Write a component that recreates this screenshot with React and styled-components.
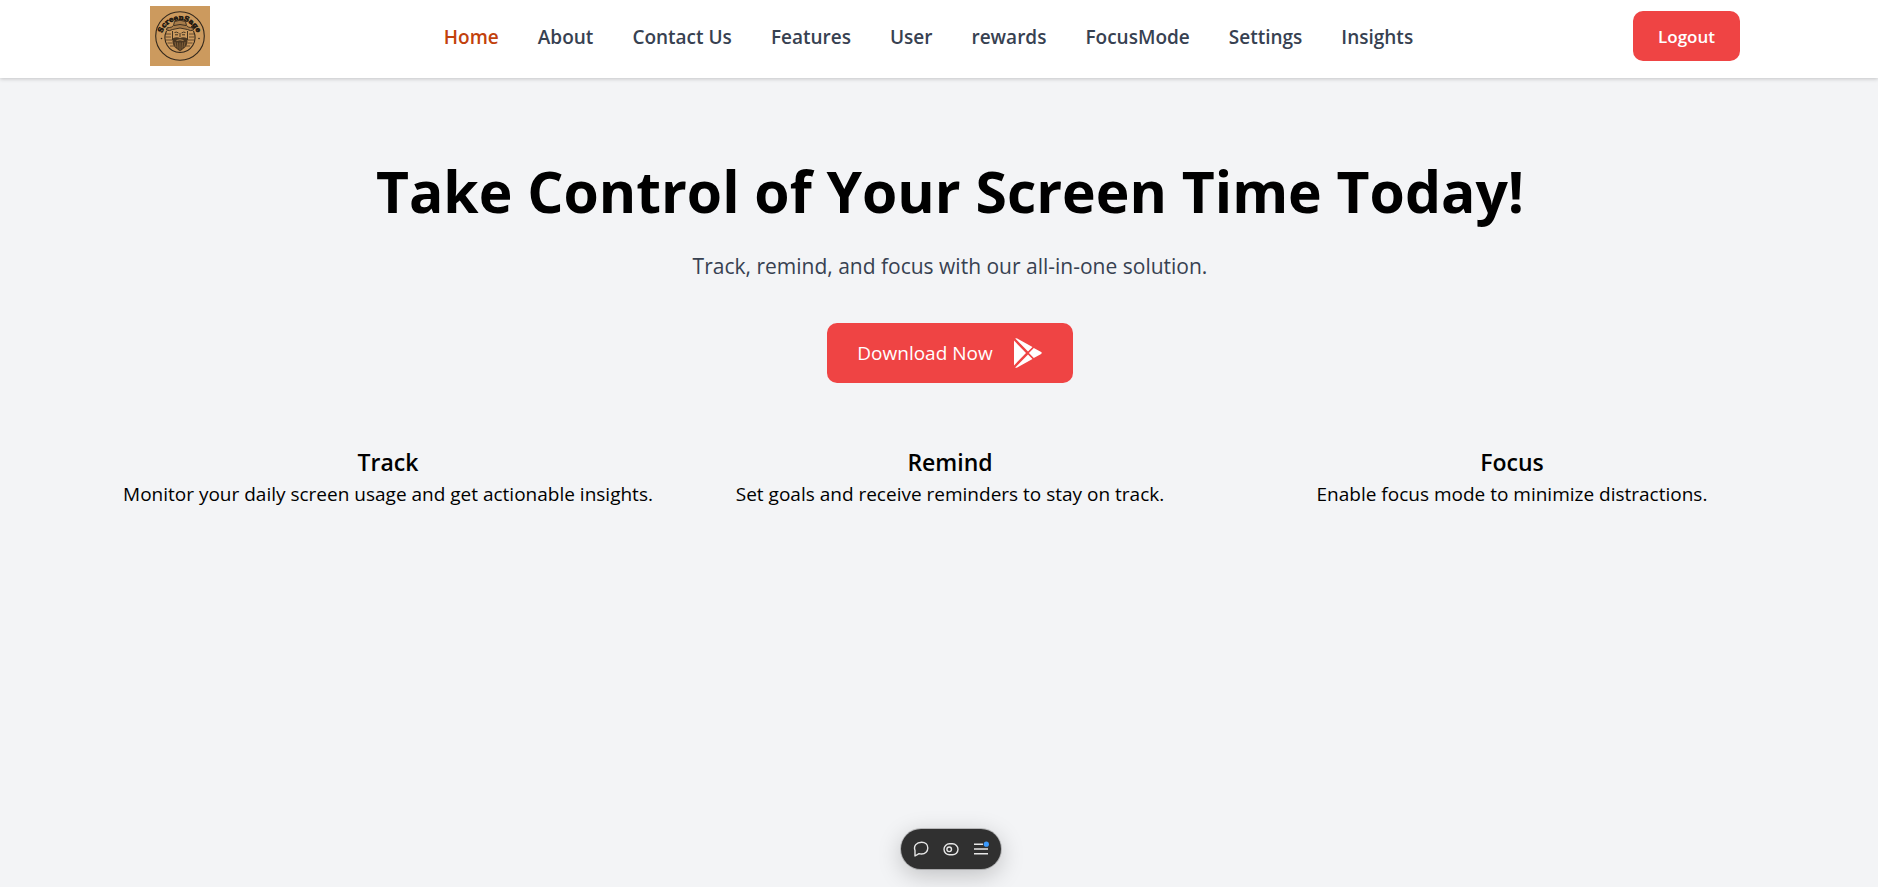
import React from "react";
import styled, { createGlobalStyle } from "styled-components";

const GlobalStyle = createGlobalStyle`
  *, *::before, *::after { box-sizing: border-box; }
  body {
    margin: 0;
    background: #f3f4f6;
    color: #000;
    font-family: "Open Sans", "Noto Sans", sans-serif;
    overflow-x: hidden;
  }
  h1, h2, p, ul { margin: 0; padding: 0; }
`;

const Page = styled.div`
  min-height: 100vh;
`;

const Header = styled.header`
  display: flex;
  align-items: flex-start;
  justify-content: space-between;
  height: 78px;
  padding: 6px 138px 0 150px;
  background: #fff;
  box-shadow: 0 1px 4px rgba(0, 0, 0, 0.2);
`;

const LogoLink = styled.a`
  display: block;
  width: 60px;
  height: 60px;
`;

const NavList = styled.ul`
  display: flex;
  gap: 39px;
  padding: 16px 0 0 14px;
  list-style: none;
`;

const NavLink = styled.a`
  display: block;
  color: ${(p) => (p.$active ? "#c2410c" : "#374151")};
  font-size: 19px;
  font-weight: 600;
  line-height: 30px;
  text-decoration: none;
  white-space: nowrap;
`;

const Button = styled.button`
  display: inline-flex;
  align-items: center;
  justify-content: center;
  gap: 20px;
  border: 0;
  border-radius: 10px;
  background: #ef4444;
  color: #fff;
  font-family: inherit;
  white-space: nowrap;
  cursor: pointer;
`;

const LogoutButton = styled(Button)`
  width: 107px;
  height: 50px;
  margin-top: 5px;
  font-size: 17px;
  font-weight: 600;
`;

const DownloadButton = styled(Button)`
  height: 60px;
  margin-top: 39px;
  padding: 0 30px;
  font-size: 19px;
`;

const Main = styled.main`
  display: flex;
  flex-direction: column;
  align-items: center;
  padding: 77px 85px 0 107px;
  text-align: center;
`;

const Title = styled.h1`
  font-size: 57px;
  font-weight: 700;
  line-height: 72px;
`;

const Subtitle = styled.p`
  margin-top: 21px;
  color: #374151;
  font-size: 21px;
  line-height: 36px;
`;

const Features = styled.section`
  display: grid;
  grid-template-columns: repeat(3, 1fr);
  width: 100%;
  margin-top: 61px;
`;

const FeatureTitle = styled.h2`
  font-size: 23px;
  font-weight: 600;
  line-height: 36px;
`;

const FeatureText = styled.p`
  font-size: 19px;
  line-height: 29px;
`;

const Toolbar = styled.div`
  position: fixed;
  bottom: 18px;
  left: calc(50% + 12px);
  display: flex;
  align-items: center;
  justify-content: center;
  gap: 14px;
  width: 100px;
  height: 40px;
  margin-left: -50px;
  border-radius: 20px;
  background: #303030;
  box-shadow: 0 0 0 1px rgba(0, 0, 0, 0.2), 0 6px 24px rgba(0, 0, 0, 0.22);
`;

const ToolButton = styled.button`
  display: flex;
  padding: 0;
  border: 0;
  background: none;
  color: #e6e6e6;
  cursor: pointer;
`;

const links = ["Home", "About", "Contact Us", "Features", "User", "rewards", "FocusMode", "Settings", "Insights"];

const features = [
  { title: "Track", text: "Monitor your daily screen usage and get actionable insights." },
  { title: "Remind", text: "Set goals and receive reminders to stay on track." },
  { title: "Focus", text: "Enable focus mode to minimize distractions." },
];

const Logo = () => (
  <svg width="60" height="60" viewBox="0 0 60 60" role="img" aria-label="ScreenSage logo">
    <rect width="60" height="60" fill="#cc9a5e" />
    <circle cx="30" cy="30" r="24.300" fill="none" stroke="#33281c" strokeWidth="1.100" />
    <defs>
      <path id="logo-arc" d="M11.500 32A18 18 0 0 1 47.500 32" />
    </defs>
    <text fill="#1c150e" stroke="#1c150e" strokeWidth="0.6" fontFamily="DejaVu Serif, serif" fontWeight="700" fontSize="7" textAnchor="middle">
      <textPath href="#logo-arc" startOffset="50%">ScreenSage</textPath>
    </text>
    <circle cx="11.500" cy="32.500" r="0.8" fill="#33281c" />
    <circle cx="49" cy="32.500" r="0.8" fill="#33281c" />
    <path d="M16.500 25a15 15 0 1 0 27 0" fill="none" stroke="#33281c" strokeWidth="1.100" />
    <g fill="none" stroke="#33281c" strokeWidth="0.9">
      <path d="M16.500 24q-.5-3 3-2.500 2.500 0 4-2l1-4q5.500-2.500 11 0l1 4q1.500 2 4 2 3.500-.5 3 2.500-3 1.500-6-.5-7.500-3-15 0-3 2-6 .5z" fill="#a87c4a" />
      <path d="M24 19.500q6-2 12 0" />
      <path d="M16 28h5M15.500 31h5.500M16 34h6M17.500 37h5M20 40h4M39 28h5M39 31h5.500M38 34h6M37.500 37h5M36 40h4" stroke="#5c4429" />
      <path d="M22.500 25v9M37.500 25v9M30 27v4" />
    </g>
    <path d="M24.500 26.500q2-1 4 .5M31.500 27q2-1.500 4-.5M25 28.800h3M32 28.800h3" fill="none" stroke="#33281c" strokeWidth="0.9" />
    <path d="M22.500 32.500q4-2 7.500-.5 3.500-1.500 7.500.5.500 6-2.500 9l-5 4-5-4q-3-3-2.500-9z" fill="#4c3822" />
    <path d="M25 36l1 5M27.500 36.500l.5 6M30 36.500v8M32.500 36.500l-.5 6M35 36l-1 5" fill="none" stroke="#a87c4a" strokeWidth="0.6" />
    <path d="M26.500 34.500q3.500-1.500 7 0" fill="none" stroke="#cc9a5e" strokeWidth="0.8" />
  </svg>
);

const PlayIcon = () => (
  <svg width="30" height="30" viewBox="0 0 30 30" fill="#fff" aria-hidden="true">
    <path d="M1 2.600v24.800L13 15zM2.200 0.500q1-.7 2 0L19.500 9.100 15 13.600zM2.200 29.500q1 .7 2 0L19.500 20.900 15 16.400zM20.800 9.900l6.900 3.900q2.200 1.200 0 2.400l-6.900 3.900L15.900 15z" />
  </svg>
);

const ChatIcon = () => (
  <svg width="16" height="16" viewBox="0 0 16 16" fill="none" stroke="currentColor" strokeWidth="1.400" strokeLinejoin="round" aria-hidden="true">
    <path d="M8.600 1.200c3.700 0 6.200 2.400 6.200 5.700S12.300 13 8.600 13c-1 0-1.800-.1-2.600-.4L2 15V9.500C.3 5 3.500 1.200 8.600 1.200z" />
  </svg>
);

const ToggleIcon = () => (
  <svg width="16" height="16" viewBox="0 0 16 16" fill="none" stroke="currentColor" strokeWidth="1.400" aria-hidden="true">
    <rect x="1" y="2.800" width="14" height="11" rx="5.500" />
    <circle cx="6.200" cy="8.300" r="2.300" />
  </svg>
);

const MenuIcon = () => (
  <svg width="16" height="16" viewBox="0 0 16 16" fill="none" aria-hidden="true">
    <path d="M1 3.300h9M1 8h14M1 12.700h14" stroke="currentColor" strokeWidth="1.600" />
    <circle cx="13.300" cy="3.200" r="2.600" fill="#3b9bff" />
  </svg>
);

export default function App() {
  return (
    <Page>
      <GlobalStyle />
      <Header>
        <LogoLink href="#home"><Logo /></LogoLink>
        <nav aria-label="Main">
          <NavList>
            {links.map((label, i) => (
              <li key={label}>
                <NavLink href={`#${label.toLowerCase().replace(" ", "-")}`} $active={i === 0}>{label}</NavLink>
              </li>
            ))}
          </NavList>
        </nav>
        <LogoutButton type="button">Logout</LogoutButton>
      </Header>
      <Main>
        <Title>Take Control of Your Screen Time Today!</Title>
        <Subtitle>Track, remind, and focus with our all-in-one solution.</Subtitle>
        <DownloadButton type="button">
          Download Now
          <PlayIcon />
        </DownloadButton>
        <Features>
          {features.map((f) => (
            <article key={f.title}>
              <FeatureTitle>{f.title}</FeatureTitle>
              <FeatureText>{f.text}</FeatureText>
            </article>
          ))}
        </Features>
      </Main>
      <Toolbar role="toolbar" aria-label="Page tools">
        <ToolButton type="button" aria-label="Comment"><ChatIcon /></ToolButton>
        <ToolButton type="button" aria-label="Toggle"><ToggleIcon /></ToolButton>
        <ToolButton type="button" aria-label="Menu"><MenuIcon /></ToolButton>
      </Toolbar>
    </Page>
  );
}
